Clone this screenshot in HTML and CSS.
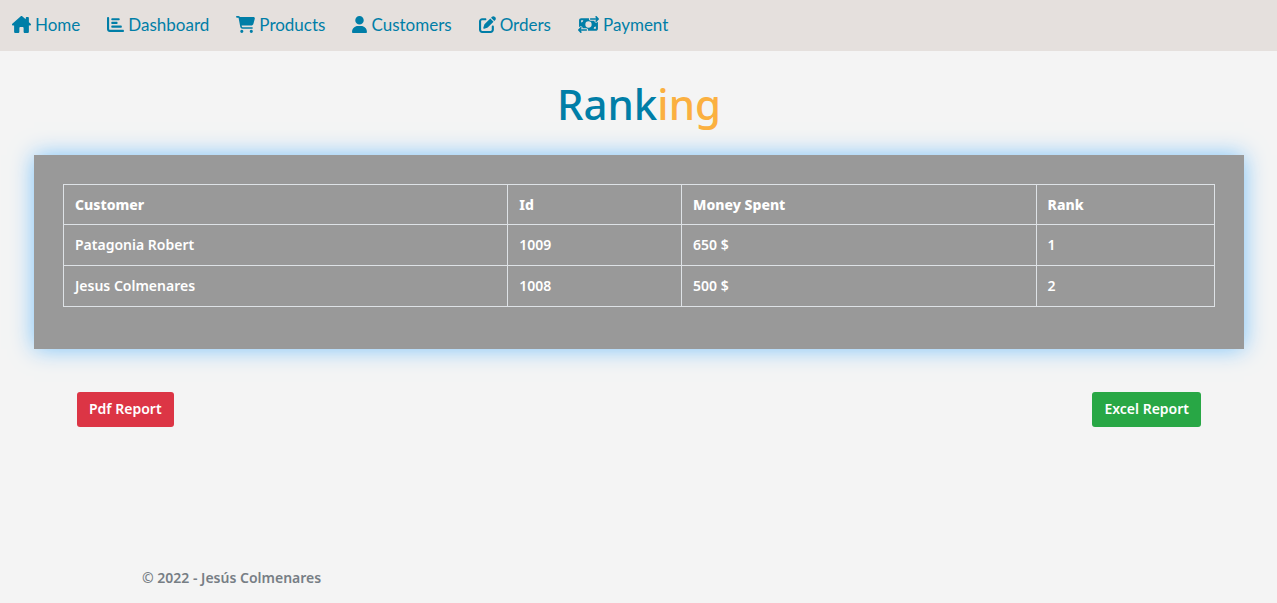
FILE: index.html
```html
<!DOCTYPE html>
<html lang="en">
<head>
<meta charset="utf-8">
<meta name="viewport" content="width=device-width, initial-scale=1">
<title>Ranking</title>
<link rel="stylesheet" href="styles.css">
</head>
<body>
<nav class="navbar">
  <a class="nav-link" href="#"><svg class="icon icon-house" viewBox="0 0 576 512" aria-hidden="true"><path d="M575.8 255.5c0 18-15 32.1-32 32.1h-32l.7 160.2c0 2.700-.2 5.400-.5 8.100V472c0 22.100-17.900 40-40 40H392c-22.100 0-40-17.900-40-40V360c0-17.700-14.300-32-32-32h-64c-17.700 0-32 14.300-32 32v112c0 22.100-17.900 40-40 40h-80c-22.100 0-40-17.900-40-40V287.600H32c-18 0-32-14-32-32.100 0-9 3-17 10-24L266.400 8c7-7 15-8 22-8s15 2 21 7L416 100V64c0-17.700 14.300-32 32-32h32c17.700 0 32 14.300 32 32v121l52.800 46.400c8 7 12 15 11 24.100z"/></svg><span>Home</span></a>
  <a class="nav-link" href="#"><svg class="icon icon-chart" viewBox="0 0 512 512" aria-hidden="true"><path d="M32 32c17.700 0 32 14.300 32 32v336c0 8.800 7.200 16 16 16h400c17.700 0 32 14.300 32 32s-14.300 32-32 32H80c-44.200 0-80-35.800-80-80V64c0-17.700 14.300-32 32-32zm96 64c0-17.700 14.300-32 32-32h192c17.700 0 32 14.300 32 32s-14.300 32-32 32H160c-17.700 0-32-14.300-32-32zm32 80h128c17.700 0 32 14.300 32 32s-14.300 32-32 32H160c-17.700 0-32-14.300-32-32s14.300-32 32-32zm0 112h256c17.700 0 32 14.300 32 32s-14.300 32-32 32H160c-17.700 0-32-14.300-32-32s14.300-32 32-32z"/></svg><span>Dashboard</span></a>
  <a class="nav-link" href="#"><svg class="icon icon-cart" viewBox="0 0 576 512" aria-hidden="true"><path d="M0 24C0 10.700 10.700 0 24 0H69.500c22 0 41.500 12.800 50.600 32h411c26.300 0 45.500 25 38.600 50.400l-41 152.300c-8.500 31.400-37 53.300-69.500 53.300H170.700l5.400 28.500c2.200 11.300 12.100 19.500 23.600 19.500H488c13.300 0 24 10.700 24 24s-10.700 24-24 24H199.700c-34.600 0-64.300-24.600-70.700-58.500L77.400 54.500c-.7-3.800-4-6.500-7.900-6.500H24C10.700 48 0 37.300 0 24zM128 464a48 48 0 1 1 96 0 48 48 0 1 1 -96 0zm336-48a48 48 0 1 1 0 96 48 48 0 1 1 0-96z"/></svg><span>Products</span></a>
  <a class="nav-link" href="#"><svg class="icon icon-user" viewBox="0 0 448 512" aria-hidden="true"><path d="M224 256A128 128 0 1 0 224 0a128 128 0 1 0 0 256zm-45.700 48C79.800 304 0 383.800 0 482.300C0 498.700 13.300 512 29.700 512H418.300c16.400 0 29.700-13.300 29.700-29.700C448 383.800 368.200 304 269.700 304H178.300z"/></svg><span>Customers</span></a>
  <a class="nav-link" href="#"><svg class="icon icon-edit" viewBox="0 0 512 512" aria-hidden="true"><path d="M471.600 21.700c-21.900-21.900-57.300-21.900-79.200 0L362.300 51.700l97.900 97.900 30.100-30.100c21.900-21.900 21.900-57.300 0-79.200L471.600 21.700zm-299.200 220c-6.100 6.100-10.800 13.600-13.500 21.900l-29.600 88.800c-2.900 8.600-.6 18.100 5.800 24.600s15.900 8.700 24.600 5.800l88.800-29.600c8.200-2.700 15.700-7.400 21.900-13.500L437.700 172.300 339.700 74.300 172.400 241.700zM96 64C43 64 0 107 0 160V416c0 53 43 96 96 96H352c53 0 96-43 96-96V320c0-17.700-14.300-32-32-32s-32 14.300-32 32v96c0 17.700-14.300 32-32 32H96c-17.700 0-32-14.300-32-32V160c0-17.700 14.300-32 32-32h96c17.700 0 32-14.300 32-32s-14.300-32-32-32H96z"/></svg><span>Orders</span></a>
  <a class="nav-link" href="#"><svg class="icon icon-money" viewBox="0 0 640 512" aria-hidden="true"><path d="M535 41c-9.300-9.400-9.300-24.600 0-34s24.600-9.400 34 0l64 64c4.500 4.500 7 10.600 7 17s-2.500 12.500-7 17l-64 64c-9.400 9.400-24.600 9.400-33.900 0s-9.400-24.600 0-33.900l23-23L384 112c-13.300 0-24-10.700-24-24s10.700-24 24-24l174.100 0L535 41zM105 377l-23 23L256 400c13.300 0 24 10.700 24 24s-10.700 24-24 24L81.900 448l23 23c9.400 9.400 9.400 24.600 0 33.900s-24.600 9.400-33.900 0L7 441c-4.500-4.500-7-10.600-7-17s2.500-12.500 7-17l64-64c9.400-9.400 24.600-9.400 33.900 0s9.400 24.600 0 33.900z"/><path fill-rule="evenodd" d="M96 64H337.900c-3.700 7.200-5.900 15.300-5.900 24c0 28.700 23.300 52 52 52H501.400c-4 17 .6 35.500 13.800 48.800c20.300 20.300 53.200 20.300 73.500 0L608 169.500V384c0 35.300-28.700 64-64 64H302.100c3.700-7.200 5.900-15.300 5.900-24c0-28.700-23.300-52-52-52H138.600c4-17-.6-35.500-13.800-48.800c-20.300-20.300-53.200-20.300-73.500 0L32 342.500V128c0-35.300 28.700-64 64-64zm64 64H96v64c35.300 0 64-28.700 64-64zM544 320c-35.300 0-64 28.700-64 64h64V320zM320 352a96 96 0 1 0 0-192 96 96 0 1 0 0 192z"/></svg><span>Payment</span></a>
</nav>
<main class="content">
  <h1 class="title">Rank<span class="title-accent">ing</span></h1>
  <section class="panel">
    <table class="ranking">
      <colgroup><col class="col-customer"><col class="col-id"><col class="col-money"><col class="col-rank"></colgroup>
      <thead><tr><th>Customer</th><th>Id</th><th>Money Spent</th><th>Rank</th></tr></thead>
      <tbody>
        <tr><td>Patagonia Robert</td><td>1009</td><td>650 $</td><td>1</td></tr>
        <tr><td>Jesus Colmenares</td><td>1008</td><td>500 $</td><td>2</td></tr>
      </tbody>
    </table>
  </section>
  <div class="actions">
    <button class="btn btn-pdf" type="button">Pdf Report</button>
    <button class="btn btn-excel" type="button">Excel Report</button>
  </div>
</main>
<footer class="footer">© 2022 - Jesús Colmenares</footer>
</body>
</html>
```
FILE: styles.css
```css
* { box-sizing: border-box; }
body {
  margin: 0;
  min-height: 100vh;
  display: flex;
  flex-direction: column;
  background: #f4f4f4;
  font-family: "Noto Sans", "Open Sans", sans-serif;
  font-size: 14px;
  font-weight: 600;
  line-height: 20px;
}
.navbar {
  display: flex;
  flex-wrap: wrap;
  gap: 27px;
  padding: 11px 12px 13px;
  background: #e5e0dd;
}
.nav-link {
  display: flex;
  align-items: center;
  gap: 4px;
  color: #007ea7;
  font-family: Lato, sans-serif;
  font-size: 17px;
  font-weight: 400;
  line-height: 27px;
  text-decoration: none;
}
.icon { height: 17px; fill: currentColor; }
.icon-house, .icon-cart { width: 19px; }
.icon-chart, .icon-edit { width: 17px; }
.icon-user { width: 15px; }
.icon-money { width: 21px; }
.content { flex: 1; padding: 23px 33px 0 34px; }
.title {
  margin: 0 0 21px;
  color: #007ea7;
  font-size: 42px;
  font-weight: 500;
  line-height: 60px;
  text-align: center;
}
.title-accent { color: #fbb040; }
.panel {
  padding: 29px 29px 42px;
  background: #999;
  box-shadow: 0 0 22px #7cc4fb;
}
.ranking {
  width: 100%;
  table-layout: fixed;
  border-collapse: collapse;
  color: #fff;
}
.ranking th, .ranking td {
  padding: 10px 11px;
  border: 1px solid #dee2e6;
  text-align: left;
}
.ranking th { font-weight: 800; line-height: 19px; }
.col-customer { width: 38.600%; }
.col-id { width: 15.100%; }
.col-money { width: 30.800%; }
.col-rank { width: 15.500%; }
.actions {
  display: flex;
  justify-content: space-between;
  padding: 43px;
}
.btn {
  padding: 6px 12px 8px;
  border: 0;
  border-radius: 3px;
  color: #fff;
  font: inherit;
  line-height: 21px;
  cursor: pointer;
}
.btn-pdf { background: #dc3545; }
.btn-excel { background: #28a745; }
.footer {
  padding: 0 142px 15px;
  color: #777e85;
  font-weight: 600;
}
```
